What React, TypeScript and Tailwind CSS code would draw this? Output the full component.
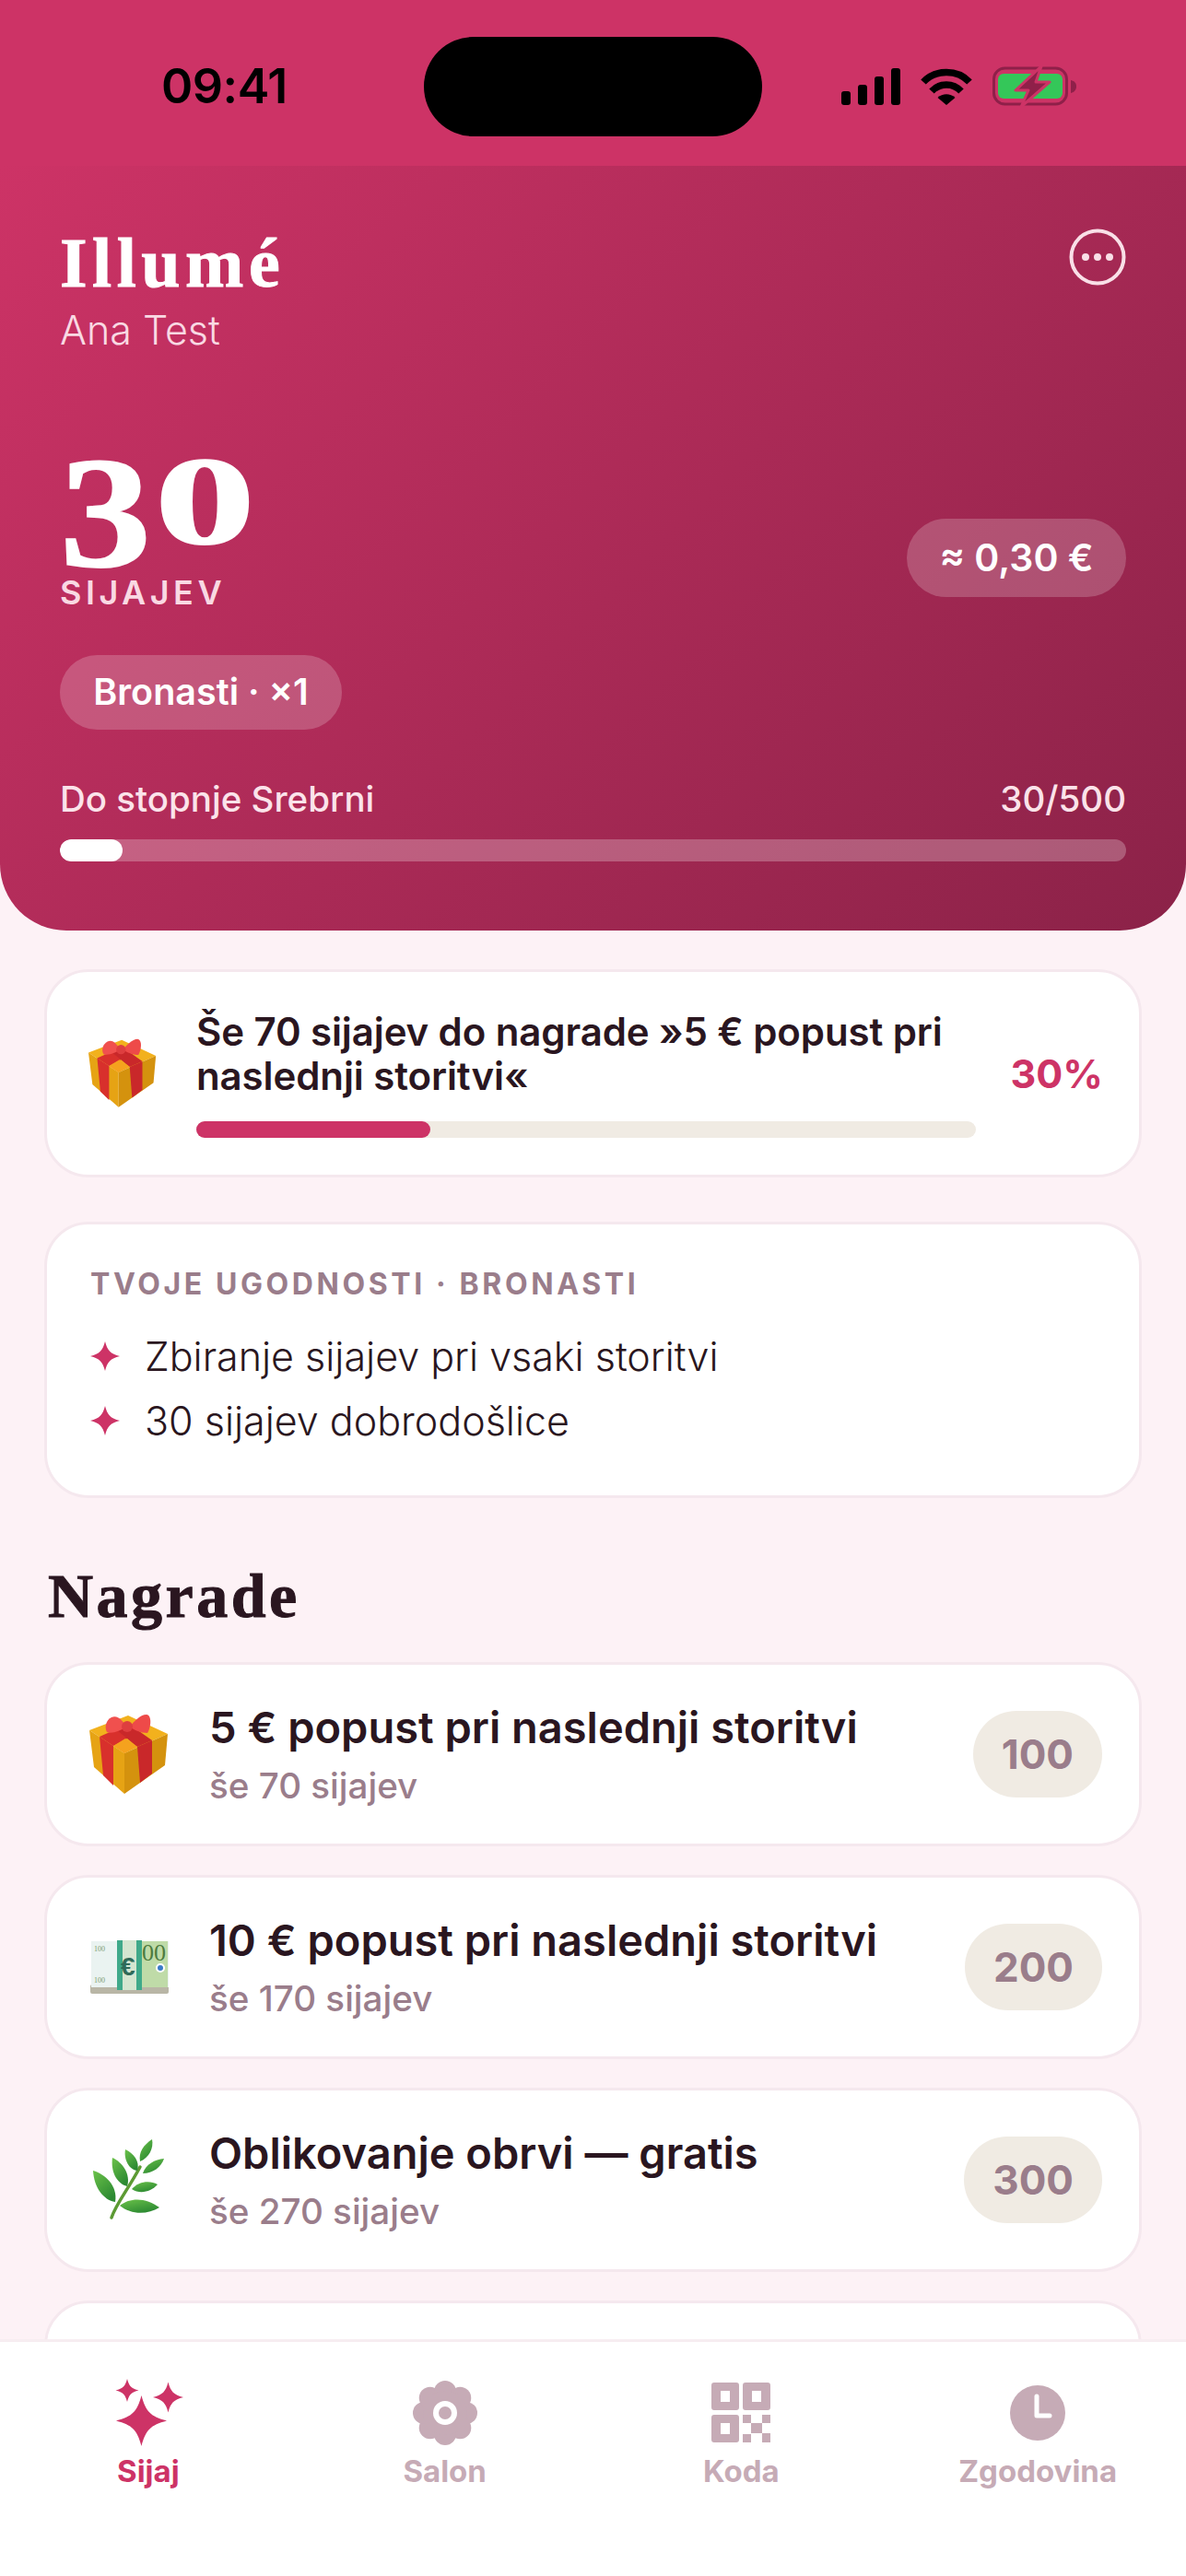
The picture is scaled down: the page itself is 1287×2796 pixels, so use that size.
import React from 'react';

const serif = "font-['Liberation_Serif',serif]";

const starPath = (cx: number, cy: number, r: number): string => {
  const a = r * 0.17;
  const b = r * 0.36;
  return `M${cx} ${cy - r}C${cx + a} ${cy - b} ${cx + b} ${cy - a} ${cx + r} ${cy}C${cx + b} ${cy + a} ${cx + a} ${cy + b} ${cx} ${cy + r}C${cx - a} ${cy + b} ${cx - b} ${cy + a} ${cx - r} ${cy}C${cx - b} ${cy - a} ${cx - a} ${cy - b} ${cx} ${cy - r}Z`;
};

const SignalIcon = () => (
  <svg width="64" height="40" viewBox="0 0 64 40" fill="#000">
    <rect x="0" y="25" width="10" height="15" rx="3" />
    <rect x="18" y="18" width="10" height="22" rx="3" />
    <rect x="36" y="9" width="10" height="31" rx="3" />
    <rect x="54" y="0" width="10" height="40" rx="3" />
  </svg>
);

const WifiIcon = () => (
  <svg width="56" height="40" viewBox="0 0 56 40" fill="none">
    <path d="M3 15C16 1 40 1 53 15" stroke="#000" strokeWidth="7.5" />
    <path d="M12 25C21 15.500 35 15.500 44 25" stroke="#000" strokeWidth="7.500" />
    <path d="M18.500 32C24 27 32 27 37.500 32L28 40Z" fill="#000" />
  </svg>
);

const BatteryIcon = () => (
  <svg width="91" height="44" viewBox="0 0 91 44" fill="none">
    <rect x="1.500" y="2" width="79" height="39" rx="12" stroke="#8F2049" strokeWidth="3" />
    <rect x="6" y="8" width="70" height="27" rx="6" fill="#34C759" />
    <path d="M85 15C89 16 91 18 91 22C91 25 89 28 85 29Z" fill="#8F2049" />
    <path d="M53 0L25 26H39L31 44L62 17H47Z" fill="#8F2049" stroke="#CD3366" strokeWidth="3" strokeLinejoin="round" />
  </svg>
);

const GiftEmoji = ({ size = 86 }: { size?: number }) => (
  <svg width={size} height={size * 88 / 86} viewBox="0 0 86 88">
    <path d="M0 18L42 2L85 22L38 43Z" fill="#F2B11D" />
    <path d="M0 18L38 43V87L5 58Z" fill="#E6A314" />
    <path d="M38 43L85 22L82 56L38 87Z" fill="#D4920E" />
    <path d="M11 25L26 35V78L15 67Z" fill="#D8302C" />
    <path d="M52 36L68 29V65L55 75Z" fill="#C9282A" />
    <path d="M11 25L26 35L54 20L40 12Z" fill="#D8302C" />
    <path d="M52 36L68 29L44 12L30 18Z" fill="#C9282A" />
    <path d="M26 35L38 43L52 36L39 27Z" fill="#F5A21E" />
    <path d="M24 4C31 1 36 8 40 14C34 19 24 22 19 20C16 15 18 7 24 4Z" fill="#F0504E" />
    <path d="M62 1C68 2 67 14 63 21C56 21 48 18 44 14C48 9 55 1 62 1Z" fill="#EE4A49" />
    <circle cx="41" cy="14" r="6" fill="#DE3E3F" />
  </svg>
);

const BillsEmoji = () => (
  <svg width="85" height="58" viewBox="0 0 85 58">
    <rect x="0" y="48" width="85" height="10" rx="2" fill="#B9B6A6" />
    <rect x="1" y="1" width="84" height="50" fill="#EAF3F1" />
    <rect x="55" y="1" width="29" height="50" fill="#BFDBA8" />
    <text x="56" y="22" fontSize="26" fontFamily="'Liberation Serif',serif" fill="#4E7B3F">00</text>
    <text x="4" y="12" fontSize="8" fontFamily="'Liberation Serif',serif" fill="#7A9A70">100</text>
    <text x="4" y="46" fontSize="8" fontFamily="'Liberation Serif',serif" fill="#7A9A70">100</text>
    <circle cx="76" cy="30" r="4" fill="#3B7BC8" stroke="#fff" strokeWidth="2" />
    <rect x="29" y="0" width="27" height="54" fill="#D4E6D0" />
    <rect x="29" y="0" width="6" height="54" fill="#3FA98A" />
    <rect x="50" y="0" width="6" height="54" fill="#3FA98A" />
    <text x="33" y="38" fontSize="28" fontWeight="700" fontFamily="'Liberation Sans',sans-serif" fill="#2F6A58">€</text>
  </svg>
);

const leaves = [
  'M25 68C12 66 2 52 1 34C14 38 28 50 25 68Z',
  'M38 51C26 48 20 34 22 20C33 25 42 38 38 51Z',
  'M49 34C40 33 34 22 36 11C45 15 52 24 49 34Z',
  'M52 24C50 14 56 6 65 0C67 9 62 20 52 24Z',
  'M55 37C58 27 68 22 78 21C75 30 66 37 55 37Z',
  'M43 54C50 46 62 44 71 49C64 57 52 60 43 54Z',
  'M30 72C42 62 60 64 73 74C60 82 42 82 30 72Z',
];

const HerbEmoji = () => (
  <svg width="80" height="88" viewBox="0 0 80 88" fill="none">
    <defs>
      <linearGradient id="leaf" x1="0" y1="0" x2="0.6" y2="1">
        <stop offset="0" stopColor="#6CC24A" />
        <stop offset="1" stopColor="#2C8A32" />
      </linearGradient>
    </defs>
    <path d="M21 85C26 70 38 56 52 30" stroke="#5C9A33" strokeWidth="3.500" strokeLinecap="round" />
    {leaves.map((d, i) => (
      <path key={i} d={d} fill="url(#leaf)" />
    ))}
  </svg>
);

const SparklesIcon = () => (
  <svg width="76" height="73" viewBox="0 0 76 73" fill="#CD3366">
    <path d={starPath(30.5, 45.5, 27.5)} />
    <path d={starPath(15, 12.5, 12.5)} />
    <path d={starPath(59.5, 20, 16.5)} />
  </svg>
);

const petals = [0, 45, 90, 135, 180, 225, 270, 315];

const FlowerIcon = () => (
  <svg width="70" height="70" viewBox="0 0 70 70" fill="#C6ABB6">
    {petals.map(a => (
      <circle key={a} cx={35 + 23 * Math.cos((a * Math.PI) / 180)} cy={35 + 23 * Math.sin((a * Math.PI) / 180)} r="12" />
    ))}
    <circle cx="35" cy="35" r="24" />
    <circle cx="35" cy="35" r="13" fill="#fff" />
    <circle cx="35" cy="35" r="7" />
  </svg>
);

const QrIcon = () => (
  <svg width="64" height="65" viewBox="0 0 64 65" fill="#C6ABB6">
    <path fillRule="evenodd" d="M3 0H27A3 3 0 0 1 30 3V27A3 3 0 0 1 27 30H3A3 3 0 0 1 0 27V3A3 3 0 0 1 3 0ZM10 9V21H20V9Z" />
    <path fillRule="evenodd" d="M37 0H61A3 3 0 0 1 64 3V27A3 3 0 0 1 61 30H37A3 3 0 0 1 34 27V3A3 3 0 0 1 37 0ZM44 9V21H54V9Z" />
    <path fillRule="evenodd" d="M3 35H27A3 3 0 0 1 30 38V62A3 3 0 0 1 27 65H3A3 3 0 0 1 0 62V38A3 3 0 0 1 3 35ZM10 44V56H20V44Z" />
    <rect x="34" y="35" width="9" height="9" />
    <rect x="55" y="35" width="9" height="9" />
    <rect x="43" y="44" width="12" height="11" />
    <rect x="34" y="56" width="9" height="9" />
    <rect x="55" y="55" width="9" height="10" />
  </svg>
);

const ClockIcon = () => (
  <svg width="60" height="60" viewBox="0 0 60 60" fill="none">
    <circle cx="30" cy="30" r="30" fill="#C6ABB6" />
    <path d="M29 12V33H43" stroke="#fff" strokeWidth="5" strokeLinecap="round" strokeLinejoin="round" />
  </svg>
);

interface Reward {
  icon: React.ReactNode;
  title: string;
  left: string;
  cost: number;
}

const rewards: Reward[] = [
  { icon: <GiftEmoji />, title: '5 € popust pri naslednji storitvi', left: 'še 70 sijajev', cost: 100 },
  { icon: <BillsEmoji />, title: '10 € popust pri naslednji storitvi', left: 'še 170 sijajev', cost: 200 },
  { icon: <HerbEmoji />, title: 'Oblikovanje obrvi — gratis', left: 'še 270 sijajev', cost: 300 },
];

const tabs = [
  { label: 'Sijaj', icon: <SparklesIcon />, active: true },
  { label: 'Salon', icon: <FlowerIcon />, active: false },
  { label: 'Koda', icon: <QrIcon />, active: false },
  { label: 'Zgodovina', icon: <ClockIcon />, active: false },
];

const perks = ['Zbiranje sijajev pri vsaki storitvi', '30 sijajev dobrodošlice'];

export default function App() {
  return (
    <div className="relative w-[1287px] h-[2796px] overflow-hidden bg-[#FDF2F6] font-['Inter',sans-serif] text-[#2A1620]">
      <div className="flex h-[180px] items-start bg-[#CD3366] pt-[40px]">
        <div className="flex h-[108px] w-[460px] items-center pl-[175px]">
          <span className="text-[52px] font-semibold tracking-[-0.5px] text-black">09:41</span>
        </div>
        <div className="h-[108px] w-[367px] rounded-full bg-black" />
        <div className="ml-[86px] flex h-[108px] items-center">
          <SignalIcon />
          <div className="ml-[22px]"><WifiIcon /></div>
          <div className="ml-[22px]"><BatteryIcon /></div>
        </div>
      </div>

      <div className="h-[830px] rounded-b-[72px] bg-[linear-gradient(135deg,#CD3366,#8B2248)] px-[65px] pt-[67px]">
        <div className="flex items-start justify-between">
          <div>
            <h1 className={`${serif} text-[76px] font-bold leading-[76px] tracking-[5.5px] text-white [-webkit-text-stroke:1px_white]`}>Illumé</h1>
            <p className="mt-[10px] text-[43px] font-light leading-[50px] text-[#F9D9E3]">Ana Test</p>
          </div>
          <svg width="62" height="62" viewBox="0 0 62 62" fill="none" className="mt-[1px]">
            <circle cx="31" cy="31" r="28.500" stroke="#F9DFE7" strokeWidth="4" />
            <circle cx="18" cy="31" r="4" fill="#F9DFE7" />
            <circle cx="31" cy="31" r="4" fill="#F9DFE7" />
            <circle cx="44" cy="31" r="4" fill="#F9DFE7" />
          </svg>
        </div>

        <div className="mt-[114px] flex items-end justify-between">
          <div>
            <div className={`${serif} flex h-[118px] items-start font-bold text-white [-webkit-text-stroke:2px_white]`}>
              <span className="inline-block origin-left scale-x-[1.15] text-[172px] leading-[118px]">3</span>
              <span className="ml-[17px] inline-block origin-left scale-x-[1.6] text-[136px] leading-[94px]">0</span>
            </div>
            <div className="mt-[8px] text-[36px] font-semibold leading-[40px] tracking-[4.5px] text-[#F9D9E3]">SIJAJEV</div>
          </div>
          <div className="mb-[15px] flex h-[85px] w-[238px] items-center justify-center rounded-full bg-white/20 text-[41px] font-semibold text-white">≈ 0,30 €</div>
        </div>

        <div className="mt-[48px] flex h-[81px] w-[306px] items-center justify-center rounded-full bg-white/20 text-[39.500px] font-semibold text-white">Bronasti · ×1</div>

        <div className="mt-[52px] flex items-center justify-between text-[38.500px] font-medium leading-[46px] text-[#FBE3EA]">
          <span>Do stopnje Srebrni</span>
          <span>30/500</span>
        </div>
        <div className="mt-[21px] h-[24px] w-full overflow-hidden rounded-full bg-white/25">
          <div className="h-full w-[68px] rounded-full bg-white" />
        </div>
      </div>

      <div className="flex flex-col px-[48px] pt-[42px]">
        <div className="flex h-[226px] items-center rounded-[48px] border-[3px] border-[#F5E8EE] bg-white pl-[45px] pr-[39px]">
          <GiftEmoji size={74} />
          <div className="ml-[43px] w-[846px]">
            <p className="text-[42px] font-semibold leading-[48px] tracking-[-0.1px]">Še 70 sijajev do nagrade »5 € popust pri naslednji storitvi«</p>
            <div className="mt-[25px] h-[18px] rounded-full bg-[#F0EBE3]">
              <div className="h-full w-[30%] rounded-full bg-[#CD3366]" />
            </div>
          </div>
          <span className="ml-auto text-[43px] font-bold text-[#CD3366]">30%</span>
        </div>

        <div className="mt-[48px] h-[300px] rounded-[48px] border-[3px] border-[#F5E8EE] bg-white px-[47px] pt-[45px]">
          <h3 className="text-[32px] font-bold leading-[40px] tracking-[3.6px] text-[#9A7D8B]">TVOJE UGODNOSTI · BRONASTI</h3>
          <ul className="mt-[23px] flex flex-col">
            {perks.map(perk => (
              <li key={perk} className="flex h-[70px] items-center">
                <svg width="32" height="32" viewBox="0 0 32 32" fill="#CD3366">
                  <path d={starPath(16, 16, 16)} />
                </svg>
                <span className="ml-[27px] text-[43px] font-light">{perk}</span>
              </li>
            ))}
          </ul>
        </div>

        <h2 className={`${serif} ml-[4px] mt-[66px] text-[68px] font-bold leading-[80px] tracking-[3.500px] [-webkit-text-stroke:1px_#2A1620]`}>Nagrade</h2>

        <div className="mt-[32px] flex flex-col gap-[31px]">
          {rewards.map(r => (
            <div key={r.cost} className="flex h-[200px] items-center rounded-[48px] border-[3px] border-[#F5E8EE] bg-white pl-[46px] pr-[40px]">
              <div className="flex w-[86px] shrink-0 justify-center">{r.icon}</div>
              <div className="ml-[44px]">
                <p className="text-[47px] font-semibold leading-[56px]">{r.title}</p>
                <p className="mt-[12px] text-[38.600px] font-medium leading-[46px] text-[#9A7D8B]">{r.left}</p>
              </div>
              <div className="ml-auto rounded-full bg-[#F0EBE3] px-[31px] py-[21px] text-[44px] font-bold leading-[52px] text-[#9A7D8B]">{r.cost}</div>
            </div>
          ))}
          <div className="h-[200px] rounded-[48px] border-[3px] border-[#F5E8EE] bg-white" />
        </div>
      </div>

      <nav className="absolute inset-x-0 bottom-0 grid h-[257px] grid-cols-4 border-t-[3px] border-[#F7EDF1] bg-white pt-[40px]">
        {tabs.map(t => (
          <div key={t.label} className="flex flex-col items-center">
            <div className="flex h-[73px] items-center justify-center">{t.icon}</div>
            <span className={`mt-[7px] text-[33px] font-bold leading-[40px] ${t.active ? 'text-[#CD3366]' : 'text-[#C6ABB6]'}`}>{t.label}</span>
          </div>
        ))}
      </nav>
    </div>
  );
}
